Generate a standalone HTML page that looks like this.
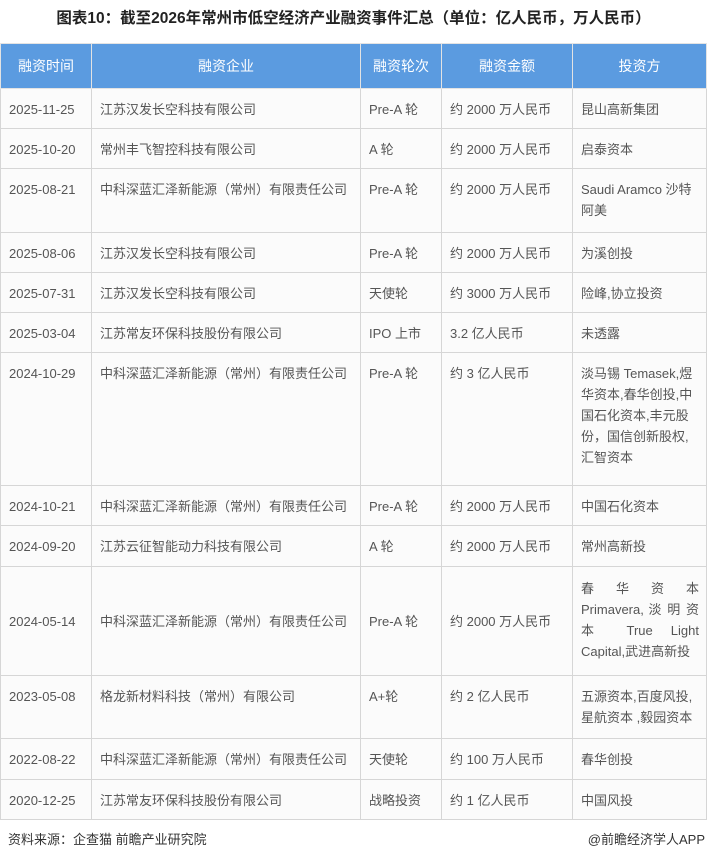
<!DOCTYPE html>
<html><head><meta charset="utf-8"><style>
body{margin:0;width:707px;height:860px;background:#fff;font-family:"Liberation Sans","Noto Sans CJK SC",sans-serif;color:#555;overflow:hidden;position:relative}
.title{position:absolute;top:6px;left:0;width:707px;text-align:center;font-weight:bold;font-size:15.5px;color:#222}
table{position:absolute;top:43px;left:0;border-collapse:collapse;table-layout:fixed;width:706px}
td,th{border:1px solid #d6d6d6;font-size:13px;line-height:21px;vertical-align:top;padding:10px 7px 0 8px;background:#fbfbfb;word-break:break-all}
th{background:#5b9be0;color:#fff;font-weight:normal;font-size:14px;text-align:center;vertical-align:middle;padding:0;height:44px;border-color:#e3e3e3}
.j{text-align:justify;text-align-last:justify}
.foot{position:absolute;top:829px;font-size:13px;color:#333}
</style></head><body>
<div class="title">图表10：截至2026年常州市低空经济产业融资事件汇总（单位：亿人民币，万人民币）</div>
<table>
<colgroup><col style="width:91px"><col style="width:269px"><col style="width:81px"><col style="width:131px"><col style="width:134px"></colgroup>
<tr><th>融资时间</th><th>融资企业</th><th>融资轮次</th><th>融资金额</th><th>投资方</th></tr>
<tr style="height:40px"><td>2025-11-25</td><td>江苏汉发长空科技有限公司</td><td>Pre-A 轮</td><td>约 2000 万人民币</td><td>昆山高新集团</td></tr>
<tr style="height:40px"><td>2025-10-20</td><td>常州丰飞智控科技有限公司</td><td>A 轮</td><td>约 2000 万人民币</td><td>启泰资本</td></tr>
<tr style="height:64px"><td>2025-08-21</td><td>中科深蓝汇泽新能源（常州）有限责任公司</td><td>Pre-A 轮</td><td>约 2000 万人民币</td><td>Saudi Aramco 沙特阿美</td></tr>
<tr style="height:40px"><td>2025-08-06</td><td>江苏汉发长空科技有限公司</td><td>Pre-A 轮</td><td>约 2000 万人民币</td><td>为溪创投</td></tr>
<tr style="height:40px"><td>2025-07-31</td><td>江苏汉发长空科技有限公司</td><td>天使轮</td><td>约 3000 万人民币</td><td>险峰,协立投资</td></tr>
<tr style="height:40px"><td>2025-03-04</td><td>江苏常友环保科技股份有限公司</td><td>IPO 上市</td><td>3.2 亿人民币</td><td>未透露</td></tr>
<tr style="height:133px"><td>2024-10-29</td><td>中科深蓝汇泽新能源（常州）有限责任公司</td><td>Pre-A 轮</td><td>约 3 亿人民币</td><td>淡马锡 Temasek,煜华资本,春华创投,中国石化资本,丰元股份，国信创新股权,汇智资本</td></tr>
<tr style="height:40px"><td>2024-10-21</td><td>中科深蓝汇泽新能源（常州）有限责任公司</td><td>Pre-A 轮</td><td>约 2000 万人民币</td><td>中国石化资本</td></tr>
<tr style="height:41px"><td>2024-09-20</td><td>江苏云征智能动力科技有限公司</td><td>A 轮</td><td>约 2000 万人民币</td><td>常州高新投</td></tr>
<tr style="height:109px"><td style="vertical-align:middle;padding-top:0">2024-05-14</td><td style="vertical-align:middle;padding-top:0">中科深蓝汇泽新能源（常州）有限责任公司</td><td style="vertical-align:middle;padding-top:0">Pre-A 轮</td><td style="vertical-align:middle;padding-top:0">约 2000 万人民币</td><td style="padding-top:11px"><div class="j">春 华 资 本</div><div class="j">Primavera, 淡 明 资</div><div class="j">本 True Light</div><div>Capital,武进高新投</div></td></tr>
<tr style="height:63px"><td>2023-05-08</td><td>格龙新材料科技（常州）有限公司</td><td>A+轮</td><td>约 2 亿人民币</td><td>五源资本,百度风投,星航资本 ,毅园资本</td></tr>
<tr style="height:41px"><td>2022-08-22</td><td>中科深蓝汇泽新能源（常州）有限责任公司</td><td>天使轮</td><td>约 100 万人民币</td><td>春华创投</td></tr>
<tr style="height:40px"><td>2020-12-25</td><td>江苏常友环保科技股份有限公司</td><td>战略投资</td><td>约 1 亿人民币</td><td>中国风投</td></tr>
</table>
<div class="foot" style="left:8px">资料来源：企查猫 前瞻产业研究院</div>
<div class="foot" style="right:2px">@前瞻经济学人APP</div>
</body></html>
